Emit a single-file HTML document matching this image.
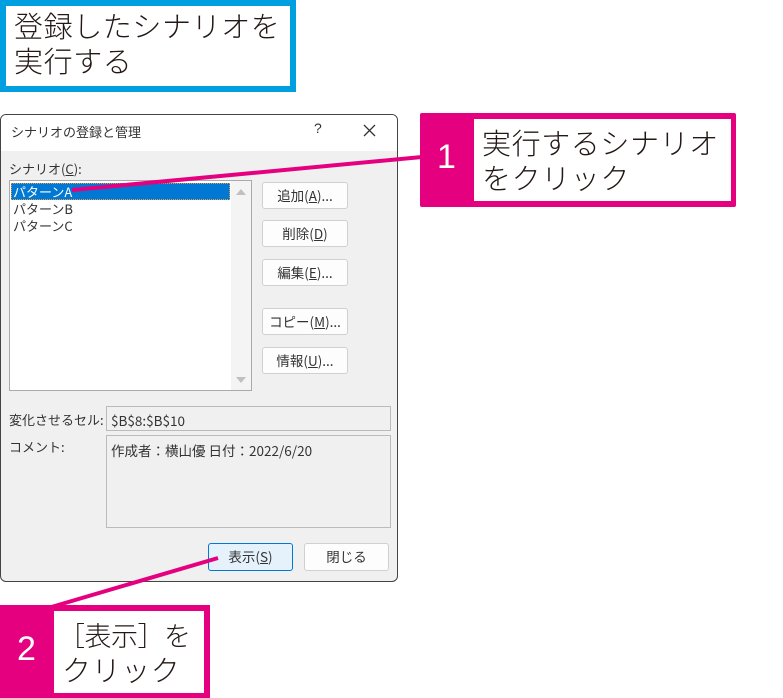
<!DOCTYPE html>
<html><head><meta charset="utf-8"><style>
*{margin:0;padding:0;box-sizing:border-box}
body{width:783px;height:698px;background:#fff;position:relative;overflow:hidden;font-family:"Liberation Sans","Noto Sans CJK JP",sans-serif;color:#222}
.a{position:absolute}
.big{font-size:29px;line-height:35px;color:#231815;font-family:"Noto Sans CJK JP",sans-serif;font-weight:300;letter-spacing:0.6px}
.s{font-size:13px;color:#333;font-family:"Noto Sans CJK JP",sans-serif}
.btn{position:absolute;left:262px;width:86px;height:27px;background:#fdfdfd;border:1px solid #d0d0d0;border-radius:3px;font-size:13.5px;text-align:center;line-height:25px;font-family:"Noto Sans CJK JP",sans-serif;color:#333}
u{text-decoration:underline}
</style></head><body>
<div class="a" style="left:0;top:0;width:296px;height:92px;border:6px solid #00a0e0"></div>
<div class="a big" style="left:14px;top:8px">登録したシナリオを<br>実行する</div>

<div class="a" style="left:0;top:114px;width:398px;height:468px;background:#f0f0f0;border:1px solid #444;border-radius:6px;overflow:hidden">
  <div class="a" style="left:0;top:0;width:398px;height:36px;background:#fff"></div>
</div>
<div class="a s" style="left:11px;top:122px">シナリオの登録と管理</div>
<div class="a" style="left:314px;top:120px;font-size:14px;color:#333">?</div>
<svg class="a" style="left:363px;top:124px" width="13" height="13"><path d="M1 1L12 12M12 1L1 12" stroke="#333" stroke-width="1.3"/></svg>
<div class="a s" style="left:9px;top:159px">シナリオ(<u>C</u>):</div>
<div class="a" style="left:9px;top:180px;width:243px;height:211px;background:#fff;border:1px solid #aaa"></div>
<div class="a" style="left:11px;top:183px;width:219px;height:17px;background:#0078d4;border:1px dotted #e0a040"></div>
<div class="a" style="left:231px;top:181px;width:20px;height:209px;background:#f4f4f4"></div>
<svg class="a" style="left:235px;top:188px" width="12" height="8"><path d="M1 7L6 1L11 7Z" fill="#c0c0c0"/></svg>
<svg class="a" style="left:235px;top:376px" width="12" height="8"><path d="M1 1L6 7L11 1Z" fill="#c0c0c0"/></svg>
<div class="a s" style="left:13px;top:183px;color:#fff;line-height:17px">パターンA</div>
<div class="a s" style="left:13px;top:200px;line-height:17px">パターンB</div>
<div class="a s" style="left:13px;top:217px;line-height:17px">パターンC</div>
<div class="btn" style="top:182px">追加(<u>A</u>)...</div>
<div class="btn" style="top:220px">削除(<u>D</u>)</div>
<div class="btn" style="top:259px">編集(<u>E</u>)...</div>
<div class="btn" style="top:308px">コピー(<u>M</u>)...</div>
<div class="btn" style="top:347px">情報(<u>U</u>)...</div>
<div class="a s" style="left:9px;top:410px">変化させるセル:</div>
<div class="a s" style="left:106px;top:406px;width:285px;height:25px;border:1px solid #bbb;background:#f0f0f0;padding:3px 4px;font-size:13.5px">$B$8:$B$10</div>
<div class="a s" style="left:9px;top:437px">コメント:</div>
<div class="a s" style="left:106px;top:435px;width:285px;height:93px;border:1px solid #bbb;background:#f0f0f0;padding:4px 4px;font-size:13.5px">作成者：横山優 日付：2022/6/20</div>
<div class="btn" style="left:208px;top:543px;width:85px;height:28px;background:#e5f1fb;border:1px solid #0078d4">表示(<u>S</u>)</div>
<div class="btn" style="left:304px;top:543px;width:85px;height:28px">閉じる</div>

<svg class="a" style="left:0;top:0" width="783" height="698"><path d="M72 190L422 157" stroke="#e4007f" stroke-width="4"/><path d="M218 558L48 608" stroke="#e4007f" stroke-width="4"/></svg>
<div class="a" style="left:420px;top:113px;width:316px;height:94px;background:#e4007f;border-radius:2px"></div>
<div class="a" style="left:474px;top:119px;width:257px;height:82px;background:#fff"></div>
<div class="a" style="left:437px;top:138px;color:#fff;font-size:34px;font-family:'Liberation Sans',sans-serif">1</div>
<div class="a big" style="left:482px;top:125px">実行するシナリオ<br>をクリック</div>
<div class="a" style="left:0;top:605px;width:210px;height:93px;background:#e4007f"></div>
<div class="a" style="left:54px;top:611px;width:150px;height:82px;background:#fff"></div>
<div class="a" style="left:17px;top:630px;color:#fff;font-size:34px;font-family:'Liberation Sans',sans-serif">2</div>
<div class="a big" style="left:58px;top:617px;font-size:27px;letter-spacing:-0.5px">［表示］を</div>
<div class="a big" style="left:62px;top:652px">クリック</div>
</body></html>
